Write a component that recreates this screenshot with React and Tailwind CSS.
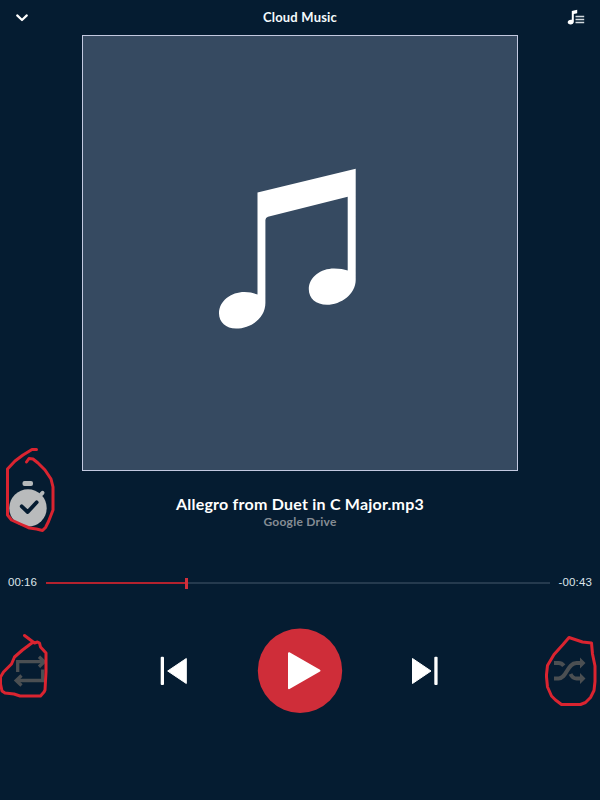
const font = "font-['Lato','Open_Sans',sans-serif]";

function Header() {
  return (
    <header className="grid h-[35px] grid-cols-[18px_1fr_18px] items-center px-[15px]">
      <svg className="h-[14px] w-[14px]" viewBox="15 10 14 14" fill="none">
        <path d="M17.200 14.400 22 19l4.800-4.600" stroke="#fff" strokeWidth="2.200" strokeLinecap="round" strokeLinejoin="round" />
      </svg>
      <h1 className={`${font} pb-[2px] text-center text-[13px] leading-4 font-bold tracking-[0.200px] text-[#f4fafc]`}>Cloud Music</h1>
      <svg className="h-[18px] w-[18px]" viewBox="567 9 18 18">
        <path d="M571.800 11 577.200 9.700v3.500l-3.400.9v7.700c0 1.500-1.400 2.700-3.200 2.700-1.700 0-2.900-.9-2.900-2.200 0-1.500 1.500-2.500 3.200-2.500h.9z" fill="#fff" />
        <path d="M575.500 16.500h8.700M575.500 19.500h8.700M575.500 22.500h8.700" stroke="#d3d9df" strokeWidth="1.400" />
      </svg>
    </header>
  );
}

function Artwork() {
  return (
    <div className="mx-auto h-[436px] w-[436px] border border-[#c3c9e0] bg-[#364a61]">
      <svg className="h-full w-full" viewBox="83 36 434 434">
        <path
          fill="#fff"
          d="M257.500 192.600 355.700 168.700V280C355.700 294 341 304.800 327 304.800C316 304.800 308.800 298.500 308.800 289.300C308.800 277 321 268.600 334 268.600C340 268.600 344 269.400 347.700 270.600V196.700L268 216.700Q265.400 217.400 265.400 220V303C265.400 318 251 328.600 236 328.600C226 328.600 219 322 219 313.500C219 301 231 292.100 244.500 292.100C250 292.100 254 293.200 257.500 294.600Z"
        />
      </svg>
    </div>
  );
}

function TimerIcon() {
  return (
    <svg className="h-[52px] w-[42px]" viewBox="8 478 42 52" fill="none">
      <rect x="22.500" y="481" width="10.500" height="5" rx="2" fill="#b5b9bb" />
      <circle cx="28" cy="508" r="18.700" fill="#b9bbbc" />
      <path d="m40.500 495 2-2.200" stroke="#b5b9bb" strokeWidth="4" strokeLinecap="round" />
      <path d="m21.700 506.300 6 5.700 9-9.700" stroke="#051c31" strokeWidth="3.800" strokeLinecap="round" strokeLinejoin="round" />
    </svg>
  );
}

function TrackInfo() {
  return (
    <section className="grid h-[71px] grid-cols-[42px_1fr_42px] px-2 pt-[7px]">
      <TimerIcon />
      <div className={`${font} pt-[16px] text-center font-bold`}>
        <h2 className="text-[16px] leading-5 tracking-[0.230px] text-white">Allegro from Duet in C Major.mp3</h2>
        <p className="text-[12px] leading-4 tracking-[0.250px] text-[#858c94]">Google Drive</p>
      </div>
    </section>
  );
}

function Progress() {
  return (
    <section className="mt-[31px] flex h-5 items-center px-2 font-['Liberation_Sans',sans-serif] text-[11.500px] text-[#dde4ea]">
      <span className="w-[38px]">00:16</span>
      <div className="flex h-[11px] w-[504px] items-center">
        <div className="h-[2px] w-[139px] bg-[#b4222e]" />
        <div className="h-[11px] w-[3px] bg-[#d12f3b]" />
        <div className="h-[2px] flex-1 bg-[#253a4e]" />
      </div>
      <span className="flex-1 text-right tracking-[0.150px]">-00:43</span>
    </section>
  );
}

function Controls() {
  return (
    <section className="mt-[35px] flex h-[86px] items-center justify-between px-[13px]">
      <svg className="h-[32px] w-[34px]" viewBox="13 655 34 32" fill="none" stroke="#4b4f52" strokeWidth="3.300">
        <path d="M17.700 672v-10.300H43M42.700 669.500v11H17" />
        <path d="m39 656.700 5.300 5-5.300 5M21.500 675.500l-5.300 5 5.300 5" />
      </svg>
      <div className="flex items-center gap-[68px]">
        <svg className="h-[32px] w-[30px]" viewBox="159 655 30 32" fill="#fff">
          <rect x="160.700" y="656.700" width="3.300" height="28.300" rx="1" />
          <path d="M186.300 658.500v25L167.700 671z" stroke="#fff" strokeLinejoin="round" />
        </svg>
        <svg className="h-[86px] w-[86px]" viewBox="257 628 86 86">
          <circle cx="300" cy="670.700" r="42.200" fill="#cf2d39" />
          <path d="M289 653.200v35L319.500 670.700z" fill="#fff" stroke="#fff" strokeWidth="2" strokeLinejoin="round" />
        </svg>
        <svg className="h-[32px] w-[30px]" viewBox="411 655 30 32" fill="#fff">
          <path d="M412.500 658.500v25L431 671z" stroke="#fff" strokeLinejoin="round" />
          <rect x="434.300" y="656.700" width="3.300" height="28.300" rx="1" />
        </svg>
      </div>
      <svg className="h-[32px] w-[34px]" viewBox="553 655 34 32" fill="none" stroke="#4b4f52" strokeWidth="4">
        <path d="M554 678.500h4.500c8.500 0 8.500-15.500 18-15.500h5M554 663h4.500c2.500 0 4 1 5.300 2.700M570.500 674c1.500 3.200 3.500 4.500 6 4.500h5" />
        <path d="m580 657.500 5.500 5.500-5.500 5.500zM580 673l5.500 5.500-5.500 5.500z" fill="#4b4f52" stroke="none" />
      </svg>
    </section>
  );
}

/* Freehand markup drawn over the player. */
function Markup() {
  return (
    <svg className="pointer-events-none absolute inset-0 h-[800px] w-[600px]" viewBox="0 0 600 800" fill="none" stroke="#da2430" strokeWidth="3" strokeLinecap="round" strokeLinejoin="round">
      <path d="M36.500 449.500H32L23 455l-8 6-7.500 8V515l4 5 11 5 7 3 7 1 6 1.500 3-3 3-6 4.500-11.500V487l-2-8-6-9-7-7-5-4-4-.5-2.500 3.500" />
      <path d="m24.500 635.500 10 7.500 3-1 2 1 1 4 5.500 6v19l-1 18-1 2-3.500 4H20l-6-2-9-1-3-2-1.500-7V677l3-5 8-8 3-7 8-7 8-6 3-2" />
      <path d="m569 637.500-6 7-9 10-6.500 11-1 9V677l1 10 4 9 4 4 6 4.500h19l5-2 5-5 3.500-7 1-9V666l-2.500-12-1-11-9-1z" />
    </svg>
  );
}

export default function App() {
  return (
    <main className="relative h-[800px] w-[600px] overflow-hidden bg-[#051c31]">
      <Header />
      <Artwork />
      <TrackInfo />
      <Progress />
      <Controls />
      <Markup />
    </main>
  );
}
